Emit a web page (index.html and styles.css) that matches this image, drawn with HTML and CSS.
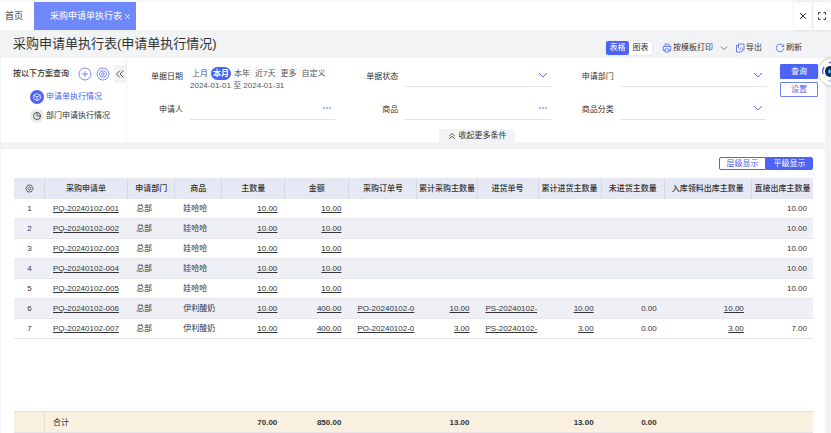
FILE: index.html
```html
<!DOCTYPE html>
<html lang="zh-CN">
<head>
    <meta charset="UTF-8">
    <meta name="viewport" content="width=device-width, initial-scale=1.0">
    <title>采购申请单执行表</title>
    <link rel="stylesheet" href="styles.css">
</head>
<body>
    <nav class="tabs">
        <a class="tab" href="#">首页</a>
        <a class="tab active" href="#">采购申请单执行表
            <svg class="tab-x" viewBox="0 0 6 6"><path d="M1 1l4 4M5 1l-4 4"/></svg>
        </a>
        <div class="tab-tools">
            <button type="button" aria-label="关闭"><svg viewBox="0 0 10 10"><path d="M2 2l6 6M8 2l-6 6"/></svg></button>
            <button type="button" aria-label="全屏"><svg viewBox="0 0 10 10"><path d="M1.500 3.500v-2h2M6.500 1.500h2v2M8.500 6.500v2h-2M3.500 8.500h-2v-2"/></svg></button>
        </div>
    </nav>

    <header class="page-head">
        <h1>采购申请单执行表(申请单执行情况)</h1>
        <div class="toolbar">
            <div class="switch">
                <button type="button" class="on">表格</button><button type="button">图表</button>
            </div>
            <button type="button" class="tool print">
                <svg viewBox="0 0 10 10"><path d="M3 3.200V1h4v2.200M3 7.500H1.200V3.500h7.600v4H7M3 6h4v3H3z"/></svg>按模板打印
                <svg class="down" viewBox="0 0 10 10"><path d="M1 3l4 4 4-4"/></svg>
            </button>
            <button type="button" class="tool export">
                <svg viewBox="0 0 10 10"><path d="M3.500 5V1H9v5.500L7.500 8M3.500 2.500H1.500V9H6l1.500-1.500V5.500M4.500 6.500L6.500 4.500"/></svg>导出
            </button>
            <button type="button" class="tool">
                <svg viewBox="0 0 10 10"><path d="M8.300 3A3.800 3.800 0 1 0 8.800 5.500M8.700 1.200v2.300H6.500"/></svg>刷新
            </button>
        </div>
    </header>

    <section class="query">
        <aside class="plans">
            <div class="plans-head">
                <h2>按以下方案查询</h2>
                <button type="button" class="round" aria-label="新增方案"><svg viewBox="0 0 14 14"><circle cx="7" cy="7" r="6"/><path d="M4 7h6M7 4v6"/></svg></button>
                <button type="button" class="round" aria-label="方案设置"><svg viewBox="0 0 14 14"><circle cx="7" cy="7" r="6"/><path d="M5 4h4l2 3-2 3H5L3 7z"/><circle cx="7" cy="7" r="1.300"/></svg></button>
                <button type="button" class="fold" aria-label="收起方案"><svg viewBox="0 0 10 10"><path d="M5 1.500L1.500 5 5 8.500M8.500 1.500L5 5l3.500 3.500"/></svg></button>
            </div>
            <a class="plan current" href="#">
                <svg viewBox="0 0 14 14"><circle class="disc" cx="7" cy="7" r="7"/><path d="M7 3.500l3.300 1.800v3.500L7 10.600 3.700 8.800V5.300zM3.700 5.300L7 7l3.300-1.700M7 7v3.600"/></svg>申请单执行情况
            </a>
            <a class="plan" href="#">
                <svg viewBox="0 0 14 14"><circle class="disc" cx="7" cy="7" r="7"/><circle cx="7" cy="7" r="3.500"/><path d="M7 3.500V7h3.500"/></svg>部门申请执行情况
            </a>
        </aside>

        <form class="filters">
            <div class="filter-row">
                <div class="fields">
                    <div class="field">
                        <span class="label">单据日期</span>
                        <div class="dates">
                            <div class="pills">
                                <button type="button">上月</button>
                                <button type="button" class="on">本月</button>
                                <button type="button">本年</button>
                                <button type="button">近7天</button>
                                <button type="button">更多</button>
                                <button type="button">自定义</button>
                            </div>
                            <div class="range">2024-01-01 至 2024-01-31</div>
                        </div>
                    </div>
                    <div class="field">
                        <label for="status">单据状态</label>
                        <div class="control">
                            <select id="status"><option></option></select>
                            <svg viewBox="0 0 10 10"><path d="M1 3l4 4 4-4"/></svg>
                        </div>
                    </div>
                    <div class="field">
                        <label for="dept">申请部门</label>
                        <div class="control">
                            <select id="dept"><option></option></select>
                            <svg viewBox="0 0 10 10"><path d="M1 3l4 4 4-4"/></svg>
                        </div>
                    </div>
                    <div class="field">
                        <label for="person">申请人</label>
                        <div class="control">
                            <input type="text" id="person">
                            <button type="button" class="more" aria-label="选择申请人"><svg viewBox="0 0 10 10"><path d="M1 5h2M4 5h2M7 5h2"/></svg></button>
                        </div>
                    </div>
                    <div class="field">
                        <label for="goods">商品</label>
                        <div class="control">
                            <input type="text" id="goods">
                            <button type="button" class="more" aria-label="选择商品"><svg viewBox="0 0 10 10"><path d="M1 5h2M4 5h2M7 5h2"/></svg></button>
                        </div>
                    </div>
                    <div class="field">
                        <label for="category">商品分类</label>
                        <div class="control">
                            <select id="category"><option></option></select>
                            <svg viewBox="0 0 10 10"><path d="M1 3l4 4 4-4"/></svg>
                        </div>
                    </div>
                </div>
                <div class="actions">
                    <button type="submit" class="primary">查询</button>
                    <button type="button">设置</button>
                </div>
            </div>
            <button type="button" class="collapse">
                <svg viewBox="0 0 10 10"><path d="M1.500 5L5 1.800 8.500 5M1.500 8.500L5 5.300l3.500 3.200"/></svg>收起更多条件
            </button>
        </form>
    </section>

    <main class="report">
        <div class="levels">
            <button type="button">层级显示</button><button type="button" class="on">平级显示</button>
        </div>
        <table>
            <colgroup>
                <col class="c-no"><col class="c-bill"><col class="c-dept"><col class="c-goods"><col class="c-qty"><col class="c-sum"><col class="c-po"><col class="c-poqty"><col class="c-ps"><col class="c-psqty"><col class="c-left"><col class="c-out"><col class="c-direct">
            </colgroup>
            <thead>
                <tr>
                    <th><svg viewBox="0 0 10 10"><path d="M3 1.300h4L9.200 5 7 8.700H3L.8 5z"/><circle cx="5" cy="5" r="1.600"/></svg></th>
                    <th>采购申请单</th>
                    <th>申请部门</th>
                    <th>商品</th>
                    <th>主数量</th>
                    <th>金额</th>
                    <th>采购订单号</th>
                    <th>累计采购主数量</th>
                    <th>进货单号</th>
                    <th>累计进货主数量</th>
                    <th>未进货主数量</th>
                    <th>入库领料出库主数量</th>
                    <th>直接出库主数量</th>
                </tr>
            </thead>
            <tbody>
                <tr><td class="no">1</td><td><a href="#">PQ-20240102-001</a></td><td>总部</td><td>娃哈哈</td><td class="num"><a href="#">10.00</a></td><td class="num"><a href="#">10.00</a></td><td></td><td></td><td></td><td></td><td></td><td></td><td class="num last">10.00</td></tr>
                <tr><td class="no">2</td><td><a href="#">PQ-20240102-002</a></td><td>总部</td><td>娃哈哈</td><td class="num"><a href="#">10.00</a></td><td class="num"><a href="#">10.00</a></td><td></td><td></td><td></td><td></td><td></td><td></td><td class="num last">10.00</td></tr>
                <tr><td class="no">3</td><td><a href="#">PQ-20240102-003</a></td><td>总部</td><td>娃哈哈</td><td class="num"><a href="#">10.00</a></td><td class="num"><a href="#">10.00</a></td><td></td><td></td><td></td><td></td><td></td><td></td><td class="num last">10.00</td></tr>
                <tr><td class="no">4</td><td><a href="#">PQ-20240102-004</a></td><td>总部</td><td>娃哈哈</td><td class="num"><a href="#">10.00</a></td><td class="num"><a href="#">10.00</a></td><td></td><td></td><td></td><td></td><td></td><td></td><td class="num last">10.00</td></tr>
                <tr><td class="no">5</td><td><a href="#">PQ-20240102-005</a></td><td>总部</td><td>娃哈哈</td><td class="num"><a href="#">10.00</a></td><td class="num"><a href="#">10.00</a></td><td></td><td></td><td></td><td></td><td></td><td></td><td class="num last">10.00</td></tr>
                <tr><td class="no">6</td><td><a href="#">PQ-20240102-006</a></td><td>总部</td><td>伊利酸奶</td><td class="num"><a href="#">10.00</a></td><td class="num"><a href="#">400.00</a></td><td class="cut"><a href="#">PO-20240102-0</a></td><td class="num"><a href="#">10.00</a></td><td class="cut"><a href="#">PS-20240102-</a></td><td class="num"><a href="#">10.00</a></td><td class="num">0.00</td><td class="num"><a href="#">10.00</a></td><td></td></tr>
                <tr><td class="no">7</td><td><a href="#">PQ-20240102-007</a></td><td>总部</td><td>伊利酸奶</td><td class="num"><a href="#">10.00</a></td><td class="num"><a href="#">400.00</a></td><td class="cut"><a href="#">PO-20240102-0</a></td><td class="num"><a href="#">3.00</a></td><td class="cut"><a href="#">PS-20240102-</a></td><td class="num"><a href="#">3.00</a></td><td class="num">0.00</td><td class="num"><a href="#">3.00</a></td><td class="num last">7.00</td></tr>
                <tr class="blank"><td colspan="13"></td></tr>
            </tbody>
            <tfoot>
                <tr><td></td><td class="total">合计</td><td></td><td></td><td class="num">70.00</td><td class="num">850.00</td><td></td><td class="num">13.00</td><td></td><td class="num">13.00</td><td class="num">0.00</td><td></td><td></td></tr>
            </tfoot>
        </table>
    </main>

    <button type="button" class="helper" aria-label="智能助手">
        <svg viewBox="0 0 28 28">
            <path class="ear" d="M4 16q-1-4 1-7M10 5q4-2 8 0"/>
            <rect class="face" x="6" y="8" width="16" height="11" rx="5"/>
            <ellipse class="eye" cx="10.500" cy="13.500" rx="1.300" ry="2"/>
            <ellipse class="eye" cx="17.500" cy="13.500" rx="1.300" ry="2"/>
            <path class="chin" d="M9 22q5 3 10 0"/>
        </svg>
    </button>
</body>
</html>
```

FILE: styles.css
```css
* {
    box-sizing: border-box;
}

body {
    margin: 0;
    min-height: 100vh;
    display: flex;
    flex-direction: column;
    position: relative;
    overflow: hidden;
    background-color: #f2f3f5;
    color: #333;
    font-family: "Liberation Sans", "Noto Sans CJK SC", sans-serif;
    font-size: 8px;
    line-height: 12px;
}

a {
    color: inherit;
    text-decoration: none;
}

button {
    margin: 0;
    padding: 0;
    border: none;
    background: none;
    color: inherit;
    font: inherit;
    white-space: nowrap;
    cursor: pointer;
}

svg {
    width: 10px;
    height: 10px;
    flex: none;
    fill: none;
    stroke: currentColor;
}

/* 顶部标签 */
.tabs {
    display: flex;
    height: 30px;
    border-top: 2px solid #f7f8fd;
    background-color: #fff;
    font-size: 9px;
}

.tab {
    display: flex;
    align-items: center;
    padding: 0 11px 0 5px;
}

.tab.active {
    gap: 2px;
    padding: 0 5px 0 16px;
    background-color: #6f88fa;
    color: #fff;
}

.tab-x {
    width: 7px;
    height: 7px;
    stroke-width: 0.7;
}

.tab-tools {
    display: flex;
    gap: 1px;
    margin-left: auto;
}

.tab-tools button {
    display: flex;
    align-items: center;
    justify-content: center;
    width: 18px;
    box-shadow: 0 0 3px rgba(0, 0, 0, 0.12);
}

/* 标题和工具栏 */
.page-head {
    display: flex;
    align-items: center;
    justify-content: space-between;
    height: 28px;
    padding: 0 29px 0 13px;
}

h1 {
    margin: 0;
    font-size: 13px;
    font-weight: normal;
    line-height: 20px;
}

.toolbar {
    display: flex;
    align-items: center;
    padding-top: 7px;
}

.switch {
    display: flex;
    margin-right: 10px;
    border-radius: 2px;
    background-color: #fff;
    box-shadow: 0 0 1px rgba(0, 0, 0, 0.3);
}

.switch button {
    width: 23px;
    height: 14px;
}

.switch .on {
    border-radius: 2px;
    background-color: #4c63f5;
    color: #fff;
}

.tool {
    display: flex;
    align-items: center;
    gap: 1px;
}

.tool svg {
    color: #5a6ff5;
    stroke-width: 0.9;
}

.tool .down {
    width: 8px;
    margin-left: 6px;
    color: #555;
}

.print {
    margin-right: 7px;
}

.export {
    margin-right: 13px;
}

/* 查询条件 */
.query {
    display: flex;
    margin: 0 6px 7px 1px;
    background-color: #fff;
}

.plans {
    display: flex;
    flex-direction: column;
    gap: 5px;
    width: 126px;
    padding: 6px 0 0 12px;
    border-right: 1px solid #f2f3f5;
}

.plans-head {
    display: flex;
    align-items: center;
    height: 19px;
    margin-bottom: 2px;
}

h2 {
    margin: 0 auto 0 0;
    font-size: 8px;
    font-weight: 500;
}

.round {
    display: flex;
    margin-right: 4px;
    color: #5a6ff5;
}

.round svg {
    width: 14px;
    height: 14px;
    stroke-width: 0.8;
}

.fold {
    display: flex;
    align-items: center;
    justify-content: center;
    width: 12px;
    height: 18px;
    background-color: #f2f3f5;
}

.fold svg {
    stroke-width: 0.8;
}

.plan {
    display: flex;
    align-items: center;
    gap: 2px;
    height: 14px;
    margin-left: 17px;
}

.plan svg {
    width: 14px;
    height: 14px;
    stroke-width: 0.8;
}

.plan .disc {
    fill: #ececec;
    stroke: none;
}

.plan.current {
    color: #4c63f5;
}

.current svg {
    stroke: #fff;
}

.current .disc {
    fill: #4c63f5;
}

.filters {
    flex: 1;
    display: flex;
    flex-direction: column;
    gap: 9px;
    padding: 6px 7px 0 9px;
}

.filter-row {
    display: flex;
    gap: 14px;
}

.fields {
    flex: 1;
    display: grid;
    grid-template-columns: repeat(3, 1fr);
    grid-template-rows: 26px 20px;
    gap: 7px 16px;
    padding-top: 3px;
}

.field {
    display: flex;
    align-items: flex-start;
    gap: 7px;
    min-width: 0;
}

.field label,
.field .label {
    width: 47px;
    line-height: 20px;
    text-align: right;
}

.dates {
    flex: 1;
    color: #555;
}

.pills {
    display: flex;
    gap: 1px;
}

.pills button {
    padding: 0 2px;
    border-radius: 7px;
    line-height: 13px;
    box-shadow: 0 0 1px #b8d4e6;
}

.pills .on {
    background-color: #4c63f5;
    color: #fff;
    font-weight: bold;
}

.control {
    flex: 1;
    display: grid;
    align-items: center;
    height: 20px;
    padding-bottom: 4px;
    border-bottom: 1px solid #e3e3e6;
    color: #5a6ff5;
}

.control > * {
    grid-area: 1 / 1;
}

.control input,
.control select {
    width: 100%;
    height: 14px;
    padding: 0 16px 0 2px;
    border: none;
    outline: none;
    background: none;
    appearance: none;
    font: inherit;
}

.control > svg,
.more {
    justify-self: end;
    margin-right: 3px;
    pointer-events: none;
}

.more {
    display: flex;
    pointer-events: auto;
}

.actions {
    display: flex;
    flex-direction: column;
    gap: 3px;
    width: 38px;
}

.actions button {
    height: 15px;
    border: 1px solid #6f83f7;
    border-radius: 1px;
    color: #4c63f5;
}

.actions .primary {
    border-color: #4c63f5;
    background-color: #4c63f5;
    color: #fff;
}

.collapse {
    display: flex;
    align-items: center;
    justify-content: center;
    align-self: center;
    gap: 3px;
    width: 76px;
    height: 13px;
    border-radius: 3px 3px 0 0;
    background-color: #f2f3f5;
}

.collapse svg {
    width: 8px;
    height: 8px;
}

/* 报表 */
.report {
    flex: 1;
    margin: 0 6px 0 1px;
    padding: 8px 12px 0 13px;
    background-color: #fff;
}

.levels {
    display: flex;
    justify-content: flex-end;
    margin-bottom: 8px;
}

.levels button {
    width: 47px;
    height: 13px;
    border: 1px solid #4c63f5;
    border-radius: 2px 0 0 2px;
    color: #4c63f5;
    line-height: 11px;
}

.levels .on {
    border-radius: 0 2px 2px 0;
    background-color: #4c63f5;
    color: #fff;
}

table {
    width: 100%;
    table-layout: fixed;
    border-collapse: separate;
    border-spacing: 0;
}

.c-no { width: 31px; }
.c-bill { width: 83px; }
.c-dept { width: 47px; }
.c-goods { width: 47px; }
.c-qty { width: 63px; }
.c-sum { width: 64px; }
.c-po { width: 68px; }
.c-poqty { width: 60px; }
.c-ps { width: 61px; }
.c-psqty { width: 63px; }
.c-left { width: 63px; }
.c-out { width: 87px; }
.c-direct { width: 61px; }

th,
td {
    height: 20px;
    padding: 0 8px;
    text-align: left;
    white-space: nowrap;
    overflow: hidden;
}

th {
    height: 21px;
    padding: 0;
    border-right: 1px solid #d5d8e2;
    background-color: #e6e9f3;
    font-weight: 500;
    text-align: center;
}

th:last-child {
    border-right: none;
}

th svg {
    display: block;
    width: 9px;
    height: 9px;
    margin: auto;
    stroke-width: 0.8;
}

td {
    padding-top: 1px;
    border-bottom: 1px solid #e6e7eb;
}

tbody tr:nth-child(even) td {
    background-color: #eff0f6;
}

td a {
    text-decoration: underline;
}

.no {
    text-align: center;
}

.num {
    text-align: right;
}

.num.last {
    padding-right: 6px;
}

.cut {
    padding-right: 0;
}

tbody tr.blank td {
    height: 73px;
    border-bottom: 1px solid #e3dfd5;
    background-color: #fff;
}

tfoot td {
    height: 21px;
    background-color: #faf0df;
}

tfoot td:first-child {
    border-right: 1px solid #e6dfd8;
}

tfoot .num {
    font-weight: bold;
}

/* 助手浮标 */
.helper {
    position: absolute;
    top: 58px;
    right: -16px;
    width: 28px;
    height: 28px;
    border-radius: 50%;
    background-color: #fff;
    box-shadow: 0 0 3px rgba(0, 0, 0, 0.35);
}

.helper svg {
    width: 28px;
    height: 28px;
}

.face {
    fill: #12295c;
    stroke: none;
}

.eye {
    fill: #3fd0ff;
    stroke: none;
}

.ear {
    stroke: #4c7bf0;
    stroke-width: 1.5;
}

.chin {
    stroke: #a8d8f5;
    stroke-width: 2;
}
```
